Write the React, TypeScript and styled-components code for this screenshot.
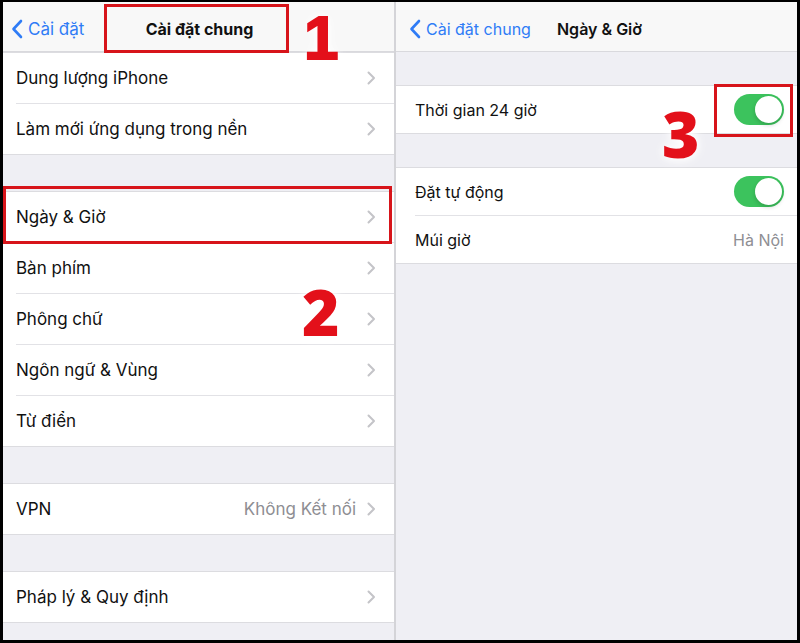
import styled, { createGlobalStyle } from "styled-components";

const Global = createGlobalStyle`
  html, body { margin: 0; padding: 0; background: #000; }
  body { font-family: "Inter", "Roboto", "Noto Sans", sans-serif; }
`;

const Frame = styled.div`
  width: 800px;
  height: 643px;
  box-sizing: border-box;
  padding: 2px 3px 3px 3px;
  background: #000;
  display: grid;
  grid-template-columns: 391px 2px 1fr;
`;

const Panel = styled.div`
  position: relative;
  background: #efeff4;
  overflow: hidden;
  display: flex;
  flex-direction: column;
`;

const Divider = styled.div`
  background: #d4d4d8;
`;

const NavBar = styled.div<{ $pad: number }>`
  height: 50px;
  box-sizing: border-box;
  padding: 5px ${(p) => p.$pad}px 0;
  background: #f8f8f8;
  border-bottom: 1px solid #d9d9dd;
  display: grid;
  grid-template-columns: 1fr auto 1fr;
  align-items: center;
`;

const Back = styled.div<{ $size: number }>`
  display: flex;
  align-items: center;
  gap: 5px;
  color: #2f7cf6;
  font-size: ${(p) => p.$size}px;
  white-space: nowrap;
`;

const Title = styled.div<{ $size: number; $weight: number; $shift: number }>`
  font-size: ${(p) => p.$size}px;
  font-weight: ${(p) => p.$weight};
  margin-left: ${(p) => p.$shift}px;
  color: #111;
  white-space: nowrap;
`;

const Gap = styled.div<{ $h: number }>`
  height: ${(p) => p.$h}px;
  flex-shrink: 0;
`;

const Group = styled.div`
  background: #fff;
  border-top: 1px solid #dcdce0;
  border-bottom: 1px solid #dcdce0;
`;

const Row = styled.div<{ $h: number; $size: number; $left: number; $right: number }>`
  height: ${(p) => p.$h}px;
  margin-left: ${(p) => p.$left}px;
  padding-right: ${(p) => p.$right}px;
  display: flex;
  align-items: center;
  gap: 11px;
  font-size: ${(p) => p.$size}px;
  color: #111;
  & + & {
    border-top: 1px solid #e2e2e6;
  }
`;

const Label = styled.span`
  flex: 1;
  white-space: nowrap;
`;

const Value = styled.span`
  color: #8e8e93;
  white-space: nowrap;
`;

const Toggle = styled.div`
  width: 50px;
  height: 31px;
  border-radius: 16px;
  background: #3cc35d;
  position: relative;
  &::after {
    content: "";
    position: absolute;
    right: 2px;
    top: 2px;
    width: 27px;
    height: 27px;
    border-radius: 50%;
    background: #fff;
    box-shadow: 0 2px 4px rgba(0, 0, 0, 0.18);
  }
`;

const Mark = styled.div<{ $x: number; $y: number; $w: number; $h: number }>`
  position: absolute;
  left: ${(p) => p.$x}px;
  top: ${(p) => p.$y}px;
  width: ${(p) => p.$w}px;
  height: ${(p) => p.$h}px;
  box-sizing: border-box;
  border: 3px solid #d7141a;
  pointer-events: none;
`;

// step numbers drawn over the screenshot; $tight uses a font with a short ascent
// so the "1" can sit near the top edge without its box leaving the page
const Num = styled.div<{ $x: number; $y: number; $tight?: boolean }>`
  position: absolute;
  left: ${(p) => p.$x}px;
  top: ${(p) => p.$y}px;
  font-family: ${(p) => (p.$tight ? '"Liberation Sans", Arial, sans-serif' : '"Open Sans", "Liberation Sans", sans-serif')};
  font-weight: ${(p) => (p.$tight ? 700 : 800)};
  font-size: ${(p) => (p.$tight ? 62 : 64)}px;
  line-height: ${(p) => (p.$tight ? "normal" : 0.8)};
  -webkit-text-stroke: ${(p) => (p.$tight ? "2px #e3101a" : "0")};
  color: #e3101a;
  text-shadow: 0 0 8px #fff, 0 0 14px #fff;
`;

const Chevron = () => (
  <svg width="9" height="14" viewBox="0 0 9 14">
    <path d="M1.5 1.5 L7 7 L1.5 12.5" fill="none" stroke="#c4c4c8" strokeWidth="2" strokeLinecap="round" strokeLinejoin="round" />
  </svg>
);

const BackArrow = () => (
  <svg width="12" height="20" viewBox="0 0 12 20">
    <path d="M10 2 L2.5 10 L10 18" fill="none" stroke="#2f7cf6" strokeWidth="2.6" strokeLinecap="round" strokeLinejoin="round" />
  </svg>
);

type Item = { label: string; value?: string };

const LeftRow = ({ label, value }: Item) => (
  <Row $h={50} $size={17} $left={13} $right={18}>
    <Label>{label}</Label>
    {value && <Value>{value}</Value>}
    <Chevron />
  </Row>
);

export default function App() {
  return (
    <>
      <Global />
      <Frame>
        <Panel>
          <NavBar $pad={8}>
            <Back $size={17}>
              <BackArrow />
              Cài đặt
            </Back>
            <Title $size={16} $weight={700} $shift={2}>Cài đặt chung</Title>
            <span />
          </NavBar>
          <Group>
            <LeftRow label="Dung lượng iPhone" />
            <LeftRow label="Làm mới ứng dụng trong nền" />
          </Group>
          <Gap $h={36} />
          <Group>
            <LeftRow label="Ngày & Giờ" />
            <LeftRow label="Bàn phím" />
            <LeftRow label="Phông chữ" />
            <LeftRow label="Ngôn ngữ & Vùng" />
            <LeftRow label="Từ điển" />
          </Group>
          <Gap $h={36} />
          <Group>
            <LeftRow label="VPN" value="Không Kết nối" />
          </Group>
          <Gap $h={36} />
          <Group>
            <LeftRow label="Pháp lý & Quy định" />
          </Group>

          <Mark $x={101} $y={2} $w={185} $h={49} />
          <Num $x={301} $y={0} $tight>1</Num>
          <Mark $x={0} $y={184} $w={389} $h={58} />
          <Num $x={299} $y={284}>2</Num>
        </Panel>
        <Divider />
        <Panel>
          <NavBar $pad={13}>
            <Back $size={16}>
              <BackArrow />
              Cài đặt chung
            </Back>
            <Title $size={16} $weight={600} $shift={6}>Ngày &amp; Giờ</Title>
            <span />
          </NavBar>
          <Gap $h={33} />
          <Group>
            <Row $h={47} $size={16} $left={19} $right={13}>
              <Label>Thời gian 24 giờ</Label>
              <Toggle />
            </Row>
          </Group>
          <Gap $h={33} />
          <Group>
            <Row $h={47} $size={16} $left={19} $right={13}>
              <Label>Đặt tự động</Label>
              <Toggle />
            </Row>
            <Row $h={47} $size={16} $left={19} $right={13}>
              <Label>Múi giờ</Label>
              <Value>Hà Nội</Value>
            </Row>
          </Group>

          <Mark $x={318} $y={82} $w={79} $h={53} />
          <Num $x={266} $y={106}>3</Num>
        </Panel>
      </Frame>
    </>
  );
}
